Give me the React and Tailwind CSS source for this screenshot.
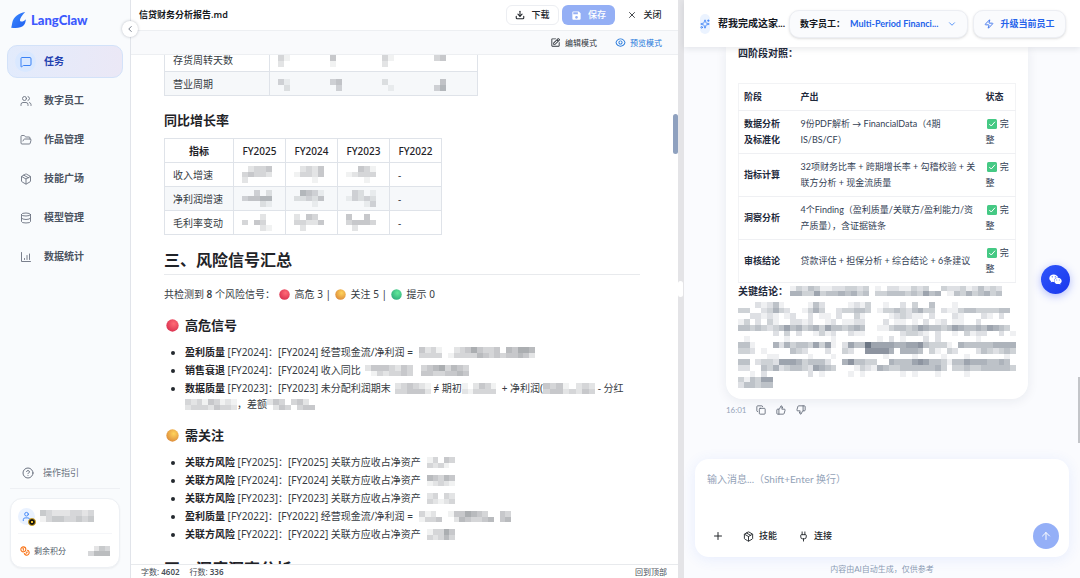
import clsx from "clsx"
import {
  ArrowUp,
  ChevronDown,
  ChevronLeft,
  CircleHelp,
  Coins,
  Copy,
  Database,
  FolderOpen,
  MessageSquare,
  Package,
  Plug,
  Plus,
  Sparkles,
  ThumbsDown,
  ThumbsUp,
  User,
  Users,
  X,
  Zap,
} from "lucide-react"
import { BiEdit } from "react-icons/bi"
import { FaWeixin } from "react-icons/fa"
import { LuDownload } from "react-icons/lu"
import { MdSave } from "react-icons/md"
import { RiEyeLine } from "react-icons/ri"

const NAV_ITEMS = [
  { label: "任务", icon: MessageSquare, active: true },
  { label: "数字员工", icon: Users },
  { label: "作品管理", icon: FolderOpen },
  { label: "技能广场", icon: Package },
  { label: "模型管理", icon: Database },
  { label: "数据统计", icon: StatsIcon },
]

const CYCLE_ROWS = [
  { name: "存货周转天数", cells: [["3100", "2000"], ["4000", "1000"], ["3100", "2000"], ["3400", "0000"]] },
  { name: "营业周期", cells: [["3100", "0200"], ["3400", "0300"], ["2000", "0100"], ["0400", "3500"]] },
]

const GROWTH_ROWS = [
  { name: "收入增速", cells: [["02334", "34332", "20000"], ["02324", "13324", "00010"], ["00431", "12333", "00010"]] },
  { name: "净利润增速", cells: [["00302", "34455", "00021"], ["05431", "22324", "00010"], ["03201", "13232", "00013"]] },
  { name: "毛利率变动", cells: [["00020", "30430", "00021"], ["20430", "33224", "02000"], ["40040", "34443", "02000"]] },
]

// A string is plain text, an object is a masked value
const HIGH_RISKS = [
  {
    title: "盈利质量",
    period: "[FY2024]",
    parts: [
      "[FY2024] 经营现金流/净利润 = ",
      { rows: ["42310023464334054665", "33330133335434344542"], className: "ml-1 w-[116px]" },
    ],
  },
  {
    title: "销售衰退",
    period: "[FY2024]",
    parts: [
      "[FY2024] 收入同比",
      { rows: ["24443243", "01323343"], className: "ml-1 w-12" },
      { rows: ["34563543", "44334454"], className: "ml-2 w-12" },
    ],
  },
  {
    title: "数据质量",
    period: "[FY2023]",
    parts: [
      "[FY2023] 未分配利润期末",
      { rows: ["234321", "334442"], className: "ml-1 w-9" },
      " ≠ 期初",
      { rows: ["1024310", "2133330"], className: "w-10" },
      "+ 净利润(",
      { rows: ["43410232", "34423243"], className: "w-[52px]" },
      " - 分红 ",
      { rows: ["323143121", "233324332"], className: "w-[52px]" },
      "，差额",
      { rows: ["24303420", "02430344"], className: "w-12" },
    ],
  },
]

const WATCH_RISKS = [
  {
    title: "关联方风险",
    period: "[FY2025]",
    parts: ["[FY2025] 关联方应收占净资产 ", { rows: ["13043", "32310"], className: "ml-1 w-7" }],
  },
  {
    title: "关联方风险",
    period: "[FY2024]",
    parts: ["[FY2024] 关联方应收占净资产 ", { rows: ["54354", "12321"], className: "ml-1 w-7" }],
  },
  {
    title: "关联方风险",
    period: "[FY2023]",
    parts: ["[FY2023] 关联方应收占净资产 ", { rows: ["23032", "32123"], className: "ml-1 w-7" }],
  },
  {
    title: "盈利质量",
    period: "[FY2022]",
    parts: [
      "[FY2022] 经营现金流/净利润 = ",
      { rows: ["3120014465430043", "1334002543345045"], className: "ml-1 w-[92px]" },
    ],
  },
  {
    title: "关联方风险",
    period: "[FY2022]",
    parts: ["[FY2022] 关联方应收占净资产 ", { rows: ["13364", "32353"], className: "ml-1 w-7" }],
  },
]

const STAGES = [
  { stage: "数据分析及标准化", output: "9份PDF解析 → FinancialData（4期 IS/BS/CF）" },
  { stage: "指标计算", output: "32项财务比率 + 跨期增长率 + 勾稽校验 + 关联方分析 + 现金流质量" },
  { stage: "洞察分析", output: "4个Finding（盈利质量/关联方/盈利能力/资产质量），含证据链条" },
  { stage: "审核结论", output: "贷款评估 + 担保分析 + 综合结论 + 6条建议" },
]

const CONCLUSION_LEAD = ["132431122332301022113230032231242320", "553363445453403344434364501435345340"]

const CONCLUSION_ROWS = [
  "000212410000142000012130010020300400010000000000",
  "330023532001353002334430133432453302113443333440",
  "002212101200201102003100001232110200021000210200",
  "130203100221200120112200020110102012011002000000",
  "443432346453453644345400113443465443465445465430",
  "000000203020013120021100000023321020010312200201",
  "010000001000000010000000102010002020000001000000",
  "441000525344363610264496666556674333105444445555",
  "332010000432000200320077775055540310320002432343",
  "000001100000100010000000010000100001000100000010",
  "440233266653444200574433005444676443144655544540",
  "220043523443265430001321543344444453033433444443",
  "001020000000201000010100000010100010000100000000",
  "314366000000000000000000000000000000000000000000",
  "244344000000000000000000000000000000000000000000",
]

function Mosaic({ rows, className }) {
  const cols = Math.max(...rows.map((row) => row.length))

  return (
    <svg
      viewBox={`0 0 ${cols} ${rows.length}`}
      preserveAspectRatio="none"
      shapeRendering="crispEdges"
      className={clsx("inline-block", className)}
      aria-hidden="true"
    >
      {rows.map((row, y) =>
        [...row].map((level, x) =>
          level === "0" ? null : (
            <rect key={`${x}-${y}`} x={x} y={y} width="1" height="1" fill="currentColor" fillOpacity={level * 0.08} />
          ),
        ),
      )}
    </svg>
  )
}

function StatsIcon({ className }) {
  return (
    <svg viewBox="0 0 24 24" className={className} fill="none" stroke="currentColor" strokeWidth="1.8" strokeLinecap="round">
      <path d="M3 3v18h18M9 17v-2M14 17V9M19 17V6" />
    </svg>
  )
}

function Logo() {
  return (
    <svg viewBox="0 0 43 47" className="h-4 w-[15px]" aria-hidden="true">
      <defs>
        <linearGradient id="logo" x1="0" y1="0" x2="1" y2="1">
          <stop offset="0" stopColor="#3d8bff" />
          <stop offset="1" stopColor="#1f5ff0" />
        </linearGradient>
      </defs>
      <path
        d="M41 0C24 3 6 14 3 32C2 38 1 43 0 46C16 48 30 47 37 39C41 34 43 27 43 21C38 27 31 30 27 27C23 24 29 12 41 0Z"
        fill="url(#logo)"
      />
    </svg>
  )
}

function Ball({ tone, className }) {
  const tones = {
    red: ["#ff6a76", "#d9304f"],
    amber: ["#ffd45c", "#dc8a3a"],
    green: ["#62e89a", "#2fae7c"],
  }
  const [light, dark] = tones[tone]

  return (
    <svg viewBox="0 0 20 20" className={clsx("inline-block shrink-0", className)} aria-hidden="true">
      <defs>
        <radialGradient id={`ball-${tone}`} cx="0.6" cy="0.35" r="0.7">
          <stop offset="0" stopColor={light} />
          <stop offset="1" stopColor={dark} />
        </radialGradient>
      </defs>
      <circle cx="10" cy="10" r="9.5" fill={`url(#ball-${tone})`} />
    </svg>
  )
}

function CheckBadge() {
  return (
    <svg viewBox="0 0 20 20" className="mx-px inline-block size-[10px] align-[-2px]" role="img" aria-label="已完成">
      <rect width="20" height="20" rx="3" fill="#45c984" />
      <path d="M5 10.5l3.5 3.5L15.5 6" fill="none" stroke="#fff" strokeWidth="2" strokeLinecap="round" />
    </svg>
  )
}

function Sidebar() {
  return (
    <aside className="relative flex w-[131px] shrink-0 flex-col border-r border-[#e1e4ea] bg-[#f9fbfd] text-[#4b5361]">
      <div className="flex items-center gap-[5px] px-[11px] pt-3 pb-[17px]">
        <Logo />
        <span className="font-[Lato,sans-serif] text-[13px] leading-4 font-black text-[#3d5afe]">LangClaw</span>
      </div>

      <nav className="flex flex-col gap-[6px] px-[7px]">
        {NAV_ITEMS.map(({ label, icon: Icon, active }) => (
          <a
            key={label}
            href="#"
            className={clsx(
              "flex h-[33px] items-center gap-2 rounded-[10px] border px-[7px] text-[10px]",
              active
                ? "border-[#d3e2f9] bg-linear-to-r from-[#e2ebfc] to-[#ebe8f6] font-bold text-[#1e40af]"
                : "border-transparent font-semibold",
            )}
          >
            <span
              className={clsx(
                "flex size-[21px] items-center justify-center rounded-full",
                active ? "bg-[#d9e8ff] text-[#3b82f6]" : "text-[#6b7280]",
              )}
            >
              <Icon className="size-3" strokeWidth={active ? 2 : 1.8} />
            </span>
            {label}
          </a>
        ))}
      </nav>

      <div className="mt-auto px-[10px] pb-[10px]">
        <a href="#" className="flex h-8 items-center gap-[9px] border-b border-[#eef0f4] px-3 text-[9px] text-[#6b7280]">
          <CircleHelp className="size-3" />
          操作指引
        </a>
        <div className="mt-[9px] rounded-xl border border-[#edf0f4] bg-white px-[7px] shadow-xs">
          <div className="flex h-[35px] items-center gap-[5px] border-b border-[#f5f6f9]">
            <span className="relative flex size-[17px] shrink-0 items-center justify-center rounded-full bg-[#eaf2ff] text-[#3b82f6]">
              <User className="size-[11px]" />
              <span className="absolute -right-px -bottom-px flex size-2 items-center justify-center rounded-full border border-[#d9a928] bg-[#17150f]">
                <span className="size-[2px] bg-[#f4c430]" />
              </span>
            </span>
            <Mosaic rows={["4322233230", "1344334340"]} className="h-3 w-[60px] text-[#55595f]" />
          </div>
          <div className="flex h-[33px] items-center gap-1 px-[2px] text-[8px]">
            <Coins className="size-[10px] text-[#f97316]" strokeWidth={2.6} />
            剩余积分
            <Mosaic rows={["0243", "3555"]} className="ml-auto h-[10px] w-[22px] text-[#55595f]" />
          </div>
        </div>
      </div>

      <button
        type="button"
        aria-label="收起侧栏"
        className="absolute top-[21px] -right-2 z-20 flex size-4 items-center justify-center rounded-full bg-white text-[#5b6472] shadow-[0_0_3px_rgba(30,40,60,0.3)]"
      >
        <ChevronLeft className="size-[10px]" />
      </button>
    </aside>
  )
}

function RiskList({ items }) {
  return (
    <ul className="mt-[9px] list-disc space-y-[2px] pl-[21px] marker:text-[#24292f]">
      {items.map((item) => (
        <li key={item.title + item.period}>
          <strong className="font-bold text-[#1f2328]">{item.title}</strong> {item.period}：
          {item.parts.map((part, i) =>
            typeof part === "string" ? (
              part
            ) : (
              <Mosaic key={i} rows={part.rows} className={clsx("h-[11px] align-[-2px] text-[#50555c]", part.className)} />
            ),
          )}
        </li>
      ))}
    </ul>
  )
}

function Report() {
  return (
    <article className="text-[10px] leading-4 text-[#363b42]">
      <table className="-mt-2 table-fixed border-collapse">
        <tbody>
          {CYCLE_ROWS.map((row) => (
            <tr key={row.name} className="h-6 even:bg-[#f6f8fa]">
              <td className="w-[105px] border border-[#dfe3e9] px-[8px]">{row.name}</td>
              {row.cells.map((cell, i) => (
                <td key={i} className="w-[52px] border-y border-[#dfe3e9] px-[8px] last:border-r">
                  <Mosaic rows={cell} className="block h-3 w-6 text-[#50555c]" />
                </td>
              ))}
            </tr>
          ))}
        </tbody>
      </table>

      <h3 className="mt-[14px] text-[13px] leading-5 font-bold text-[#1f2328]">同比增长率</h3>
      <table className="mt-2 table-fixed border-collapse">
        <thead>
          <tr className="h-6 text-[#1f2328]">
            <th className="w-[69px] border border-[#dfe3e9] font-bold">指标</th>
            {["FY2025", "FY2024", "FY2023", "FY2022"].map((year) => (
              <th key={year} className="w-[52px] border border-[#dfe3e9] font-medium">
                {year}
              </th>
            ))}
          </tr>
        </thead>
        <tbody>
          {GROWTH_ROWS.map((row) => (
            <tr key={row.name} className="h-6 even:bg-[#f6f8fa]">
              <td className="border border-[#dfe3e9] px-[8px] whitespace-nowrap">{row.name}</td>
              {row.cells.map((cell, i) => (
                <td key={i} className="border border-[#dfe3e9] px-[8px]">
                  <Mosaic rows={cell} className="block h-[17px] w-[30px] text-[#50555c]" />
                </td>
              ))}
              <td className="border border-[#dfe3e9] px-[8px]">-</td>
            </tr>
          ))}
        </tbody>
      </table>

      <h2 className="mt-[13px] border-b border-[#e8eaed] pb-[2px] text-[16px] leading-6 font-bold text-[#1f2328]">
        三、风险信号汇总
      </h2>
      <p className="mt-[11px]">
        共检测到 <strong className="font-semibold">8</strong> 个风险信号：
        <Ball tone="red" className="mr-[2px] ml-1 size-[11px] align-[-2px]" /> 高危 3 |
        <Ball tone="amber" className="mr-[2px] ml-1 size-[11px] align-[-2px]" /> 关注 5 |
        <Ball tone="green" className="mr-[2px] ml-1 size-[11px] align-[-2px]" /> 提示 0
      </p>

      <h3 className="mt-[13px] flex items-center gap-[6px] pl-[2px] text-[13px] leading-5 font-bold text-[#1f2328]">
        <Ball tone="red" className="size-[13px]" />
        高危信号
      </h3>
      <RiskList items={HIGH_RISKS} />

      <h3 className="mt-[13px] flex items-center gap-[6px] pl-[2px] text-[13px] leading-5 font-bold text-[#1f2328]">
        <Ball tone="amber" className="size-[13px]" />
        需关注
      </h3>
      <RiskList items={WATCH_RISKS} />

      <h2 className="mt-[15px] text-[16px] leading-6 font-bold text-[#1f2328]">四、深度洞察分析</h2>
    </article>
  )
}

function Editor() {
  return (
    <main className="flex min-w-0 flex-[58] flex-col bg-white">
      <header className="flex h-[31px] shrink-0 items-center border-b border-[#edeff2] pr-[7px] pl-2 text-[9px]">
        <h1 className="text-[9px] font-bold text-[#16191d]">
          信贷财务分析报告<span className="font-semibold">.md</span>
        </h1>
        <div className="ml-auto flex items-center gap-[3px] font-medium text-[#22262b]">
          <button type="button" className="flex h-5 w-[53px] items-center justify-center gap-[6px] rounded-md border border-[#eceef2]">
            <LuDownload className="size-[10px]" strokeWidth={2.6} />
            下载
          </button>
          <button type="button" className="flex h-5 w-[53px] items-center justify-center gap-[6px] rounded-md bg-[#94aff5] text-white">
            <MdSave className="size-[11px]" />
            保存
          </button>
          <button type="button" className="flex h-5 w-[53px] items-center justify-center gap-[6px]">
            <X className="size-[10px]" />
            关闭
          </button>
        </div>
      </header>

      <div className="flex h-6 shrink-0 items-center justify-end gap-[18px] border-b border-[#edeff2] bg-[#f9fafc] pr-4 text-[8px] text-[#2f343b]">
        <button type="button" className="flex items-center gap-1">
          <BiEdit className="size-[11px]" />
          编辑模式
        </button>
        <button type="button" className="flex items-center gap-1 text-[#2377db]">
          <RiEyeLine className="size-[11px]" />
          预览模式
        </button>
      </div>

      <div className="relative min-h-0 flex-1 overflow-hidden pr-[38px] pl-[33px]">
        <Report />
        <div className="absolute top-[59px] right-0 h-10 w-[5px] rounded-full bg-[#8fa1bf]" />
      </div>

      <footer className="flex h-[14px] shrink-0 items-center gap-[10px] border-t border-[#e8eaed] pr-[11px] pl-[10px] text-[8px] leading-3 text-[#4a5058]">
        <span>
          字数: <b className="font-semibold">4602</b>
        </span>
        <span>
          行数: <b className="font-semibold">336</b>
        </span>
        <a href="#" className="ml-auto">
          回到顶部
        </a>
      </footer>
    </main>
  )
}

function StageTable() {
  return (
    <table className="mt-6 w-full table-fixed border-collapse border border-[#f2f3f5] text-left text-[9px] leading-4">
      <colgroup>
        <col className="w-[57px]" />
        <col />
        <col className="w-[35px]" />
      </colgroup>
      <thead>
        <tr className="border-b border-[#eff0f3] text-[#1e293b]">
          <th className="px-[5px] py-[5px] font-semibold">阶段</th>
          <th className="px-[5px] py-[5px] font-semibold">产出</th>
          <th className="px-[5px] py-[5px] font-semibold">状态</th>
        </tr>
      </thead>
      <tbody>
        {STAGES.map((row) => (
          <tr key={row.stage} className="border-b border-[#eff0f3]">
            <th className="py-[5px] pr-3 pl-[5px] font-bold text-[#1e293b]">{row.stage}</th>
            <td className="py-[5px] pl-[5px]">{row.output}</td>
            <td className="py-[5px] pl-[5px]">
              <CheckBadge /> 完整
            </td>
          </tr>
        ))}
      </tbody>
    </table>
  )
}

function Chat() {
  return (
    <section className="relative flex min-w-0 flex-[42] flex-col bg-[#fafbfe] font-[Lato,'Noto_Sans_CJK_SC',sans-serif] text-[#334155]">
      <header className="z-10 flex h-[47px] shrink-0 items-center bg-white pr-[14px] pl-4 shadow-[0_2px_6px_rgba(30,40,60,0.1)]">
        <span className="flex h-5 w-[10px] shrink-0 items-center justify-center rounded-full bg-[#ebf3ff] text-[#3b82f6]">
          <Sparkles className="size-[10px] shrink-0" />
        </span>
        <h2 className="ml-2 flex-1 text-[10px] font-bold whitespace-nowrap text-[#14181f]">帮我完成这家...</h2>
        <button
          type="button"
          className="flex h-7 w-[179px] shrink-0 items-center rounded-[10px] border border-[#eceef3] bg-[#fafbfd] px-[10px] text-[9px] font-bold text-[#14181f] shadow-sm"
        >
          数字员工：
          <span className="ml-[5px] flex-1 text-left whitespace-nowrap text-[#2563eb]">Multi-Period Financi...</span>
          <ChevronDown className="size-[10px] text-[#3b82f6]" />
        </button>
        <button
          type="button"
          className="ml-[5px] flex h-7 w-[93px] shrink-0 items-center justify-center gap-[6px] rounded-[10px] border border-[#eceef3] bg-[#fafbfd] text-[9px] font-bold text-[#2563eb] shadow-sm"
        >
          <Zap className="size-[10px]" />
          升级当前员工
        </button>
      </header>

      <div className="min-h-0 flex-1 pr-[52px] pl-[42px]">
        <div className="rounded-b-2xl bg-white px-3 pb-[11px] shadow-[0_2px_12px_rgba(30,40,60,0.08)]">
          <p className="text-[10px] leading-3 font-semibold text-[#1e293b]">四阶段对照：</p>
          <StageTable />
          <div className="flex h-4 items-center text-[10px] leading-4 text-[#1e293b]">
            <strong className="font-bold">关键结论：</strong>
            <Mosaic rows={CONCLUSION_LEAD} className="mr-2 ml-[2px] h-[10px] flex-1 text-[#334155]" />
          </div>
          <Mosaic rows={CONCLUSION_ROWS} className="mt-[3px] block h-[86px] w-full text-[#334155]" />
        </div>
        <div className="mt-[5px] flex items-center gap-[10px] text-[8px] leading-3 text-[#94a3b8]">
          <time className="-mr-[6px] w-[26px]">16:01</time>
          <button type="button" aria-label="复制" className="text-[#5b6472]">
            <Copy className="size-[10px]" />
          </button>
          <button type="button" aria-label="赞" className="text-[#5b6472]">
            <ThumbsUp className="size-[10px]" />
          </button>
          <button type="button" aria-label="踩" className="text-[#5b6472]">
            <ThumbsDown className="size-[10px]" />
          </button>
        </div>
      </div>

      <form className="mx-[11px] rounded-[14px] bg-white px-3 pt-3 pb-2 shadow-[0_2px_14px_rgba(59,110,246,0.1)]">
        <textarea
          aria-label="输入消息"
          placeholder="输入消息...（Shift+Enter 换行）"
          className="block h-[52px] w-full resize-none text-[10px] leading-4 outline-none placeholder:text-[#94a3b8]"
        />
        <div className="flex items-center text-[9px] font-medium text-[#22262b]">
          <button type="button" aria-label="添加" className="flex w-[23px] justify-center">
            <Plus className="size-3" />
          </button>
          <button type="button" className="ml-[13px] flex items-center gap-[5px]">
            <Package className="size-[11px]" />
            技能
          </button>
          <button type="button" className="ml-[21px] flex items-center gap-[5px]">
            <Plug className="size-[11px]" />
            连接
          </button>
          <button
            type="button"
            aria-label="发送"
            className="-mr-[2px] ml-auto flex size-[26px] items-center justify-center rounded-full bg-[#94aff7] text-white"
          >
            <ArrowUp className="size-3" />
          </button>
        </div>
      </form>
      <p className="pt-[6px] pb-[3px] text-center text-[8px] leading-3 text-[#8b9bb4]">内容由AI自动生成，仅供参考</p>

      <button
        type="button"
        aria-label="微信客服"
        className="absolute top-[265px] right-[10px] z-10 flex size-[29px] items-center justify-center rounded-full bg-linear-to-br from-[#2f55fb] to-[#1a36ec] text-white shadow-[0_2px_8px_rgba(40,70,245,0.35)]"
      >
        <FaWeixin className="size-[13px]" />
      </button>
      <div className="absolute top-[377px] right-0 h-[66px] w-[2px] bg-[#c3c5c9]" />
    </section>
  )
}

export default function App() {
  return (
    <div className="flex h-screen overflow-hidden font-['Noto_Sans','Noto_Sans_CJK_SC',sans-serif]">
      <Sidebar />
      <Editor />
      <div className="flex w-[6px] shrink-0 items-center bg-[#e4e4e7]">
        <div className="h-4 w-[5px] rounded-sm bg-white" />
      </div>
      <Chat />
    </div>
  )
}
